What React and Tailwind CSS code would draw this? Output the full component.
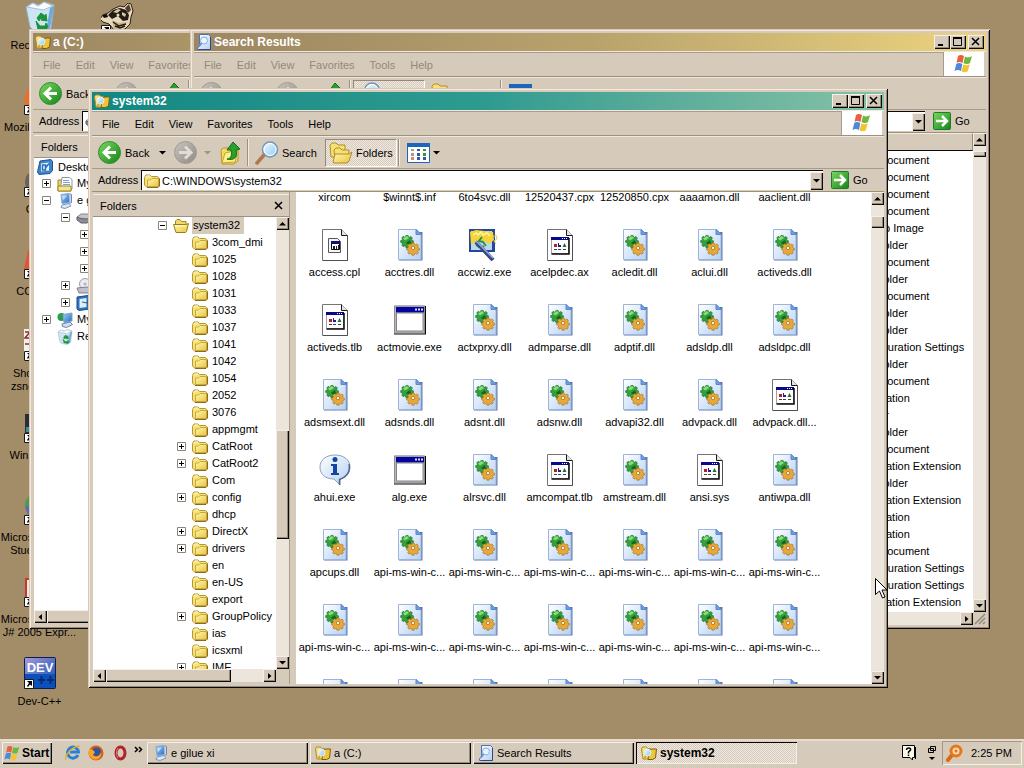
import { useState } from "react";

const raised =
  "bg-[#d6cbbb] shadow-[inset_1px_1px_#f6efe7,inset_-1px_-1px_#0c0a08,inset_-2px_-2px_#94897a]";
const dither =
  "bg-[repeating-conic-gradient(#f0e9e1_0_25%,#d6cbbb_0_50%)] bg-[length:2px_2px]";

const files = [
  ["xircom", "dll"], ["$winnt$.inf", "dll"], ["6to4svc.dll", "dll"], ["12520437.cpx", "doc"], ["12520850.cpx", "doc"], ["aaaamon.dll", "dll"], ["aaclient.dll", "dll"],
  ["access.cpl", "cpl"], ["acctres.dll", "dll"], ["accwiz.exe", "wizard"], ["acelpdec.ax", "doc"], ["acledit.dll", "dll"], ["aclui.dll", "dll"], ["activeds.dll", "dll"],
  ["activeds.tlb", "doc"], ["actmovie.exe", "exe"], ["actxprxy.dll", "dll"], ["admparse.dll", "dll"], ["adptif.dll", "dll"], ["adsldp.dll", "dll"], ["adsldpc.dll", "dll"],
  ["adsmsext.dll", "dll"], ["adsnds.dll", "dll"], ["adsnt.dll", "dll"], ["adsnw.dll", "dll"], ["advapi32.dll", "dll"], ["advpack.dll", "dll"], ["advpack.dll...", "doc"],
  ["ahui.exe", "info"], ["alg.exe", "exe"], ["alrsvc.dll", "dll"], ["amcompat.tlb", "doc"], ["amstream.dll", "dll"], ["ansi.sys", "doc"], ["antiwpa.dll", "dll"],
  ["apcups.dll", "dll"], ...Array(20).fill(["api-ms-win-c...", "dll"]),
];

const folders = [
  { name: "3com_dmi" },
  { name: "1025" },
  { name: "1028" },
  { name: "1031" },
  { name: "1033" },
  { name: "1037" },
  { name: "1041" },
  { name: "1042" },
  { name: "1054" },
  { name: "2052" },
  { name: "3076" },
  { name: "appmgmt" },
  { name: "CatRoot", more: true },
  { name: "CatRoot2", more: true },
  { name: "Com" },
  { name: "config", more: true },
  { name: "dhcp" },
  { name: "DirectX", more: true },
  { name: "drivers", more: true },
  { name: "en" },
  { name: "en-US" },
  { name: "export" },
  { name: "GroupPolicy", more: true },
  { name: "ias" },
  { name: "icsxml" },
  { name: "IME", more: true },
];

const types = [
  "Text Document", "Text Document", "Text Document", "Text Document", "Bitmap Image", "File Folder",
  "Text Document", "File Folder", "Text Document", "File Folder", "File Folder",
  "Configuration Settings", "File Folder", "Text Document", "Application", "Cursor",
  "File Folder", "Text Document", "Application Extension", "File Folder", "Application Extension",
  "Application", "Application", "Text Document", "Configuration Settings", "Configuration Settings",
  "Application Extension",
];

const shortcuts = [
  { label: "Recycle Bin", icon: "bin" },
  { label: "Mozilla Firefox", icon: "firefox" },
  { label: "CDex", icon: "gray" },
  { label: "CCleaner", icon: "red" },
  { label: "Shortcut to zsnesw.exe", icon: "zsnes" },
  { label: "Win Firewall", icon: "dark" },
  { label: "Microsoft Visual Studio 2005", icon: "studio" },
  { label: "Microsoft Visual J# 2005 Expr...", icon: "jsharp" },
  { label: "Dev-C++", icon: "dev" },
];

/* Shared gradients */
function Gradients() {
  const stops = {
    gPage: ["#ffffff", "#b4d0f4"],
    gFolder: ["#fffab0", "#e9c340"],
    gGreen: ["#7bd860", "#128418"],
    gGray: ["#c9c4be", "#8f8a84"],
    gLens: ["#f4fcff", "#8cc8f0"],
    gBlue: ["#9cd4fa", "#2468c0"],
    gDev: ["#a79ad8", "#0a4cb4"],
  };
  return (
    <svg className="absolute" width="0" height="0" aria-hidden="true">
      <defs>
        {Object.entries(stops).map(([id, [a, b]]) => (
          <linearGradient key={id} id={id} x1="0" y1="0" x2="1" y2="1">
            <stop offset="0" stopColor={a} />
            <stop offset="1" stopColor={b} />
          </linearGradient>
        ))}
      </defs>
    </svg>
  );
}

function Svg({ w = 16, h = w, box, className = "", children }) {
  return (
    <svg width={w} height={h} viewBox={box || `0 0 ${w} ${h}`} className={`shrink-0 ${className}`} aria-hidden="true">
      {children}
    </svg>
  );
}

function FolderIcon() {
  return (
    <Svg>
      <path d="M.500 4.500L2 2h4l1.500 1.500h6L15 5v7.500L14 14H2.500L.500 12z" fill="#f6e27c" stroke="#b8982c" />
      <path d="M2 4.500L3 3h3" fill="none" stroke="#fffbd0" />
      <path d="M3.500 7h3L8 5.500h6.500v8h-11z" fill="url(#gFolder)" stroke="#c8a83c" />
      <path d="M15.500 5.500v7.500L14 14.500H3" fill="none" stroke="#8c6c1c" />
    </Svg>
  );
}

function OpenFolderIcon() {
  return (
    <Svg>
      <path d="M2.500 12V3l1.500-1.500h3L8.500 3.500H13v3" fill="#f2d868" stroke="#a8861c" />
      <path d="M.500 6.500h12.500l2.500-1-2 8-1 1H3z" fill="url(#gFolder)" stroke="#9c7c1c" />
      <path d="M2 8h11" stroke="#fffbd0" />
    </Svg>
  );
}

function SearchFolderIcon() {
  return (
    <Svg>
      <path d="M.500 4l1-2h4l1 1.500h3V14H2z" fill="#f7e27a" stroke="#b08c20" />
      <path d="M8 5l3-1h4.500l-1 9-3 1.500H7z" fill="#eec63c" stroke="#7c5c10" />
      <circle cx="6.500" cy="7.500" r="3.500" fill="url(#gLens)" stroke="#e8f0f0" />
      <path d="M3 14l2-3" stroke="#d8a040" strokeWidth="2" />
    </Svg>
  );
}

function SearchDocIcon() {
  return (
    <Svg>
      <path d="M3.500.500h9l2 2v13h-13v-2l2-1z" fill="url(#gPage)" stroke="#5070b8" />
      <path d="M14.500 3v12.500h-12" fill="none" stroke="#2c4688" />
      <circle cx="8" cy="6.500" r="3.500" fill="#e4f6ff" stroke="#86b0dc" />
      <path d="M5.500 9L3 12.500" stroke="#6c90cc" strokeWidth="2" />
    </Svg>
  );
}

function ComputerIcon() {
  return (
    <Svg>
      <path d="M4 1.500l8-1 1 9-8 1z" fill="url(#gBlue)" stroke="#88a8d0" />
      <path d="M12.500.500l2 1v8l-2 1" fill="#c4d4ec" stroke="#7088b0" />
      <path d="M5 12l7-1.500 2 2.500-6 2.500-4-1z" fill="#dce6f4" stroke="#8296b4" />
      <path d="M5 3l5-.500-4 5z" fill="#d8f2ff" opacity=".7" />
    </Svg>
  );
}

function DesktopIcon() {
  return (
    <Svg>
      <path d="M3 2l11-1.500 1.500 2v9L13 14.500 2 15.500.500 13z" fill="#3c84cc" stroke="#1c5494" />
      <path d="M4 4.500l8-1v8l-8 1z" fill="#e8f6ff" />
      <path d="M5.500 6h3v5h-3zM8 9.500l4-5" fill="none" stroke="#2a6cb4" strokeWidth="1.500" />
    </Svg>
  );
}

function DocsFolderIcon() {
  return (
    <Svg>
      <path d="M1 4h5l1 2h7v9H1z" fill="#f0d45c" stroke="#a4841c" />
      <path d="M5 1.500h7.500l2.500 2V13H3.500z" fill="#fff" stroke="#8898a8" />
      <path d="M6 4.500h6M6 6.500h7M6 8.500h7" stroke="#78a4d0" />
      <path d="M1 10h13v5H1z" fill="#f4e498" stroke="#a4841c" />
    </Svg>
  );
}

function DriveIcon() {
  return (
    <Svg>
      <path d="M1 7l4-3h8l3 3-5 4H5z" fill="#c4c4c8" stroke="#85858c" />
      <path d="M1 7l4 1.500 6 .500 5-2v2.500L11 13H5L1 10z" fill="#8c8c94" stroke="#606068" />
    </Svg>
  );
}

function DiscIcon() {
  return (
    <Svg>
      <ellipse cx="9" cy="6" rx="5.500" ry="5.500" fill="#eceaf4" stroke="#9c9cac" />
      <circle cx="9" cy="6" r="1.500" fill="#b0b0c8" />
      <path d="M1 10l10-1 4 2-3 4H3z" fill="#c0c0c8" stroke="#808088" />
    </Svg>
  );
}

function PanelIcon() {
  return (
    <Svg>
      <path d="M1 2l11-1.500 2 1.500v12L3 15.500 1 14z" fill="#2f74bc" stroke="#1a4a88" />
      <path d="M3.500 4l7-1v9l-7 1z" fill="#d8f0ff" />
      <path d="M6 7l8 1.500M11 6l4 3-4 2" stroke="#38506c" fill="none" />
    </Svg>
  );
}

function NetworkIcon() {
  return (
    <Svg>
      <circle cx="4.500" cy="5" r="4" fill="#2c9c4c" />
      <path d="M6 2.500l9-1.500v8l-8 1.500z" fill="url(#gBlue)" stroke="#7ca4cc" />
      <path d="M5 12l8-2 2.500 2.500-6 3-4-1z" fill="#d4dcf0" stroke="#6c80a8" />
    </Svg>
  );
}

function BinIcon({ size = 16 }) {
  return (
    <Svg w={size} box="0 0 32 32">
      <path d="M2 6l6-4 7 2 6-3 9 3-3 23-6 4-12-2-3-3z" fill="#cfe4f2" stroke="#8fb0c8" />
      <path d="M3 6l6-4 5 3 6-4 9 4-10 4z" fill="#f8fcff" stroke="#a8c0d0" />
      <path d="M26 7l4-2-4 22-4 3z" fill="#70a8d8" />
      <path d="M13 17l4-5 4 3 1-2 1 7-6-1 2-1-2-1-2 3zM12 20l4 5h5l1-3 2 4-4 4-1-2h-5z" fill="#18943c" stroke="#18943c" />
    </Svg>
  );
}

function Gear({ cx, cy, fill, stroke }) {
  return (
    <g transform={`translate(${cx} ${cy}) scale(.92)`} fill={fill} stroke={stroke} strokeWidth=".6">
      <path d="M-1.200-5.500h2.400l.4 1.500 1.300.5 1.400-.9 1.600 1.700-.8 1.300.5 1.300 1.400.4v2l-1.500.4-.5 1.100.8 1.500-1.700 1.500-1.300-.8-1.200.4-.4 1.400h-2.400l-.3-1.500-1.200-.4-1.500.8-1.500-1.700.8-1.300-.5-1.200-1.500-.4v-2l1.500-.4.5-1.200-.8-1.400 1.600-1.700 1.400.9 1.300-.5z" />
    </g>
  );
}

function FileIcon({ kind }) {
  if (kind === "dll")
    return (
      <Svg w={32}>
        <path d="M5 3h23.500v28.500H5z" fill="#5c78ac" />
        <path d="M4.500.500h18l4.500 4.500v25.500h-22.500z" fill="url(#gPage)" stroke="#9cb4dc" />
        <path d="M22 .500v5h5.500z" fill="#6c9ee4" stroke="#5c88cc" />
        <Gear cx={13} cy={11.5} fill="#34a03c" stroke="#14641c" />
        <path d="M9 9.500l4-2.500 2 2-4 2.500z" fill="#86e078" />
        <path d="M12 14l4-3 1 3-2 2z" fill="#14641c" />
        <Gear cx={19} cy={19} fill="#e6a83c" stroke="#9c6810" />
        <circle cx="19" cy="19" r="1.700" fill="#fbf3d0" stroke="#9c6810" strokeWidth=".7" />
      </Svg>
    );
  if (kind === "exe")
    return (
      <Svg w={32}>
        <path d="M0 2h32v28.500H0z" fill="#080808" />
        <path d="M0 1.500h31v28H0z" fill="#b8b8bc" />
        <path d="M.500 2h30v27H.500z" fill="none" stroke="#8c8c90" />
        <path d="M2 3h28v5.500H2z" fill="#0404a0" />
        <path d="M2.500 9h26.500v18H2.500z" fill="#fff" stroke="#848488" />
        <path d="M21 4.500h2v2h-2zM24 4.500h2v2h-2zM27 4.500h2v2h-2z" fill="#e0e0e0" />
      </Svg>
    );
  if (kind === "info")
    return (
      <Svg w={32}>
        <path d="M16 1c9 0 15 5 15 12 0 6-4 10-10 12v6l-6-6C6 25 1 20 1 13 1 6 7 1 16 1z" fill="url(#gPage)" stroke="#8ca0bc" />
        <path d="M30 10c2 9-4 14-9.500 15.500V31" fill="none" stroke="#54688c" strokeWidth="1.500" />
        <circle cx="16" cy="5.500" r="2.500" fill="#1444a4" />
        <path d="M12 10h6v9h2v2h-8v-2h2v-7h-2z" fill="#1444a4" />
      </Svg>
    );
  if (kind === "wizard")
    return (
      <Svg w={32}>
        <path d="M0 0h26v23H0z" fill="#24489c" />
        <path d="M2 2h21v19H2z" fill="#b8d8f4" />
        <path d="M1 3l6-2 17 2 1 8-5 4-9-5-9 6z" fill="#f4d438" />
        <path d="M4 6l3-2 2 2 3-3 2 3 4-2 3 3" fill="none" stroke="#fff6a0" strokeWidth="1.500" />
        <path d="M13 8l-3 4 4 1 3 4M8 12c-2 5 3 8 7 5" fill="none" stroke="#309440" strokeWidth="2" />
        <path d="M22 9l5-3 1 4-3 2 2 3" fill="none" stroke="#e8c850" />
        <path d="M7 13l17 18" stroke="#38487c" strokeWidth="4" />
        <path d="M7 12l17 17" stroke="#98a8e0" strokeWidth="1.500" />
      </Svg>
    );
  // generic page, the control panel one has a smaller window on it
  return (
    <Svg w={32}>
      <path d="M3.500.500h19l6 6v25h-25z" fill="#fff" stroke="#747474" />
      <path d="M22.500.500v6h6" fill="#e4e4e4" stroke="#181818" />
      <path d="M28.500 7v24.500H4" fill="none" stroke="#505050" />
      {kind === "cpl" ? (
        <>
          <path d="M9.500 9.500h9l3 3v11h-12z" fill="#f4f4f4" stroke="#585858" />
          <path d="M12.500 12.500h8v8h-8z" fill="#fff" stroke="#080808" />
          <path d="M12 12h9v3h-9z" fill="#101070" />
          <path d="M14 17h2v3h-2zM17 17h1v3h-1zM19 16h1v4h-1z" fill="#202020" />
        </>
      ) : (
        <>
          <path d="M7.500 8.500h17v16h-17z" fill="#fff" stroke="#a0a0a0" />
          <path d="M7 8h18v3H7z" fill="#080888" />
          <path d="M18 9h1v1h-1zM20 9h1v1h-1zM22 9h1v1h-1z" fill="#fff" />
          <path d="M25 9v16H7.500" fill="none" stroke="#080808" strokeWidth="1.500" />
          <path d="M10 15h3v3h-3z" fill="#b42020" />
          <path d="M14 14h1v4h-1zM15 16h2v2h-2z" fill="#1c1c9c" />
          <path d="M18.500 18l2-4 2 4z" fill="#1c7430" />
          <path d="M10 20.500h3M14 20.500h3M19 20.500h3" stroke="#404040" />
        </>
      )}
    </Svg>
  );
}

function RoundArrow({ back, on }) {
  return (
    <Svg w={23}>
      <circle cx="11.500" cy="11.500" r="11" fill={on ? "url(#gGreen)" : "url(#gGray)"} stroke={on ? "#2f8c2c" : "#a09a92"} />
      <path
        d={back ? "M18 11.500H6.500M12 5.500l-6 6 6 6" : "M5 11.500h11.500M11 5.500l6 6-6 6"}
        fill="none"
        stroke={on ? "#fff" : "#e2dcd6"}
        strokeWidth="3"
      />
    </Svg>
  );
}

function UpIcon() {
  return (
    <Svg w={22} h={24}>
      <path d="M1 9l2-2h5l2 2 8-1v12l-4 3H2z" fill="#f3dc66" stroke="#b8942c" />
      <path d="M2 22l3-10 13-3-3 12z" fill="#fbf088" stroke="#c4a438" />
      <path d="M7 18c5 0 5-6 4-9H7l6-8 7 7-4 1c2 7-2 11-9 9z" fill="#28a02c" stroke="#106c18" />
    </Svg>
  );
}

function SearchIcon() {
  return (
    <Svg w={24}>
      <path d="M9 14l-7 8" stroke="#b07850" strokeWidth="3.500" strokeLinecap="round" />
      <circle cx="15" cy="8.500" r="7.500" fill="url(#gLens)" stroke="#7494bc" strokeWidth="1.500" />
      <circle cx="15" cy="8.500" r="6" fill="none" stroke="#fff" />
    </Svg>
  );
}

function FoldersIcon() {
  return (
    <Svg w={24}>
      <path d="M1 4l2-2h4l2 2h7v12H2z" fill="#f6e078" stroke="#b08c24" />
      <path d="M5 9l2-2h4l2 2h7l-1 12H6z" fill="#f6e078" stroke="#b08c24" />
      <path d="M4 21l2-8h14l3-2-3 9-2 2H5z" fill="url(#gFolder)" stroke="#b08c24" />
    </Svg>
  );
}

function ViewsIcon() {
  return (
    <Svg w={23} h={20}>
      <path d="M.500.500h22v19H.500z" fill="#fff" stroke="#1c64bc" />
      <path d="M0 0h23v4H0z" fill="#1c64bc" />
      <g fill="#a49a98"><path d="M4 6h3v2H4zM4 10h3v3H4z" /></g>
      <path d="M10 6h3v2h-3zM10 10h3v3h-3z" fill="#3458a8" />
      <path d="M16 6h3v2h-3zM16 10h3v3h-3z" fill="#389444" />
      <path d="M4 14h3v3H4z" fill="#d88868" />
      <path d="M10 14h3v3h-3zM16 14h3v3h-3z" fill="#3458a8" />
    </Svg>
  );
}

function GoIcon() {
  return (
    <Svg w={18}>
      <rect x=".5" y=".5" width="17" height="17" rx="1" fill="url(#gGreen)" stroke="#1c7c2c" />
      <path d="M3 9h10M9 4l5 5-5 5" fill="none" stroke="#fff" strokeWidth="2.500" />
    </Svg>
  );
}

function FlagIcon({ size = 20 }) {
  return (
    <Svg w={size} box="0 0 20 20">
      <path d="M4 2c2-1.500 4-1 6 0L8.500 9c-2-1-4-1.500-6 0z" fill="#e8603c" />
      <path d="M11 2.500c2 1 4 1.500 7-.5L16 9c-2 1.500-4 1.200-6.500.3z" fill="#6cb83c" />
      <path d="M2.300 10c2-1.500 4-1 6 0L7 17c-2-1.200-4-1.500-6.500 0z" fill="#4c88dc" />
      <path d="M9.300 10.500c2 1 4 1.300 6.500-.3l-2 7c-2 1.500-4 1.300-6.300.3z" fill="#f4c430" />
    </Svg>
  );
}

function Caret({ dir = "down", className = "" }) {
  const paths = { down: "M0 1h7L3.500 4.500z", up: "M0 4.500h7L3.500 1z", left: "M5 0v6L1.500 3z", right: "M2 0v6l3.500-3z" };
  return (
    <Svg w={7} h={6} className={className}>
      <path d={paths[dir]} fill="currentColor" />
    </Svg>
  );
}

function Expander({ open }) {
  return (
    <Svg w={9} className="bg-white">
      <path d="M.500.500h8v8h-8z" fill="#fff" stroke="#8c8478" />
      <path d={open ? "M2 4.500h5" : "M2 4.500h5M4.500 2v5"} stroke="#000" />
    </Svg>
  );
}

function ScrollButton({ dir }) {
  return (
    <button type="button" aria-label={`Scroll ${dir}`} className={`flex h-[13px] w-[13px] shrink-0 items-center justify-center ${raised}`}>
      <Caret dir={dir} />
    </button>
  );
}

function VScroll({ before, thumb }) {
  return (
    <div className="flex w-[13px] shrink-0 flex-col bg-[#ebe5dc]">
      <ScrollButton dir="up" />
      <div className="flex-1">
        <div className={before} />
        <div className={`${thumb} ${raised}`} />
      </div>
      <ScrollButton dir="down" />
    </div>
  );
}

function CaptionButton({ label, children }) {
  return (
    <button type="button" aria-label={label} className={`flex h-[14px] w-4 items-center justify-center ${raised}`}>
      <Svg w={10}>{children}</Svg>
    </button>
  );
}

function TitleBar({ title, icon, color }) {
  return (
    <header className={`flex h-[18px] shrink-0 items-center gap-[2px] bg-linear-to-r px-0.5 text-white ${color}`}>
      {icon}
      <h2 className="flex-1 text-[12px] leading-4 font-bold">{title}</h2>
      <div className="flex">
        <CaptionButton label="Minimize">
          <path d="M1 8h5" stroke="#000" strokeWidth="2" />
        </CaptionButton>
        <CaptionButton label="Maximize">
          <path d="M.500 1v7.500h8V1" fill="none" stroke="#000" />
          <path d="M0 1h9" stroke="#000" strokeWidth="2" />
        </CaptionButton>
        <span className="w-0.5" />
        <CaptionButton label="Close">
          <path d="M1 1l7 7M8 1L1 8" stroke="#000" strokeWidth="1.500" />
        </CaptionButton>
      </div>
    </header>
  );
}

function MenuBar({ faded }) {
  return (
    <nav className="flex h-[26px] shrink-0 border-y border-b-[#9c9080] border-t-[#f0e8de] pr-0.5">
      <div className={`flex flex-1 items-center gap-[15px] border-t border-r border-[#a89c8c] pl-2.5 ${faded ? "text-[#94897a]" : "text-black"}`}>
        {["File", "Edit", "View", "Favorites", "Tools", "Help"].map((item) => (
          <button key={item} type="button">{item}</button>
        ))}
      </div>
      <div className="flex w-10 items-center justify-center bg-white">
        <FlagIcon />
      </div>
    </nav>
  );
}

function Divider() {
  return <span className="mx-px h-[27px] w-0.5 shrink-0 border-r border-l border-r-[#f4ece4] border-l-[#9c9080]" />;
}

function ToolBar({ pressed, canBack }) {
  const toggled = `${dither} border-[#94897a] border-r-white border-b-white`;
  const plain = "border-transparent";
  return (
    <div className="flex h-8 shrink-0 items-center border-t border-t-[#f0e8de] pl-1.5">
      <button type="button" className="flex items-center gap-1">
        <RoundArrow back on={canBack} />
        <span className={`w-[26px] text-left ${canBack ? "" : "text-[#94897a]"}`}>Back</span>
      </button>
      <button type="button" aria-label="Back history" className="ml-2 w-[15px]"><Caret /></button>
      <button type="button" aria-label="Forward"><RoundArrow /></button>
      <button type="button" aria-label="Forward history" className="ml-[7px] w-4 text-[#a09486]"><Caret /></button>
      <button type="button" aria-label="Up" className="mr-1"><UpIcon /></button>
      <Divider />
      <button type="button" aria-pressed={pressed === "search"} className={`ml-px flex h-7 w-[72px] items-center gap-[3px] border pl-[3px] ${pressed === "search" ? toggled : plain}`}>
        <SearchIcon />
        Search
      </button>
      <button type="button" aria-pressed={pressed === "folders"} className={`ml-0.5 flex h-7 w-[72px] items-center gap-[3px] border pl-[3px] ${pressed === "folders" ? toggled : plain}`}>
        <FoldersIcon />
        Folders
      </button>
      <Divider />
      <button type="button" aria-label="Views" className="ml-1.5 flex items-center gap-[3px]">
        <ViewsIcon />
        <Caret />
      </button>
    </div>
  );
}

function AddressBar({ id, icon, initial = "" }) {
  const [path, setPath] = useState(initial);
  return (
    <div className="flex h-6 shrink-0 items-center border-t border-b border-t-[#a89c8c] border-b-[#9a9270] pr-0.5 pl-1.5">
      <label htmlFor={id} className="w-[43px]">Address</label>
      <div className="flex h-5 flex-1 items-center border-t border-l border-t-[#0c0a08] border-l-[#0c0a08] bg-white pl-0.5">
        {icon}
        <input id={id} value={path} onChange={(e) => setPath(e.target.value)} className="ml-0.5 min-w-0 flex-1 outline-none" />
        <button type="button" aria-label="Address list" className={`flex h-[18px] w-[13px] items-center justify-center ${raised}`}>
          <Caret />
        </button>
      </div>
      <button type="button" className="ml-2 flex w-[51px] items-center gap-1">
        <GoIcon />
        Go
      </button>
    </div>
  );
}

function Window({ className, title, icon, color, faded, pressed, canBack, address, addressIcon, children }) {
  return (
    <section
      className={`absolute flex flex-col bg-[#d6cbbb] p-1 shadow-[inset_1px_1px_#d9c8b6,inset_-1px_-1px_#0c0a08,inset_2px_2px_#f4e9de,inset_-2px_-2px_#94897a] ${className}`}
    >
      <TitleBar title={title} icon={icon} color={color} />
      <MenuBar faded={faded} />
      <ToolBar pressed={pressed} canBack={canBack} />
      <AddressBar id={`address-${title}`} icon={addressIcon} initial={address} />
      <div className="flex min-h-0 flex-1">{children}</div>
    </section>
  );
}

function FolderPane({ children, before, thumb, bar }) {
  return (
    <aside className="flex w-[198px] shrink-0 flex-col border-r border-[#a89c8c] py-0.5 pl-px">
      <div className="flex h-[23px] shrink-0 items-center justify-between border-t border-b border-t-[#f4ece4] border-b-[#9c9080] pr-1.5 pl-[7px]">
        Folders
        <button type="button" aria-label="Close folders">
          <Svg w={9}><path d="M1 1l7 7M8 1L1 8" stroke="#000" strokeWidth="1.500" /></Svg>
        </button>
      </div>
      <div className="flex min-h-0 flex-1 bg-white">
        <ul className="min-w-0 flex-1 overflow-hidden">{children}</ul>
        <VScroll before={before} thumb={thumb} />
      </div>
      <div className="flex h-[13px] shrink-0 bg-[#ebe5dc]">
        <ScrollButton dir="left" />
        <div className="flex-1"><div className={`h-[13px] ${bar} ${raised}`} /></div>
        <ScrollButton dir="right" />
        <span className="w-[13px] bg-[#d6cbbb]" />
      </div>
    </aside>
  );
}

function TreeRow({ icon, label, indent, state, selected }) {
  return (
    <li className={`flex h-[17px] items-center whitespace-nowrap ${indent}`}>
      <span className="w-[15px] shrink-0">{state && <Expander open={state === "open"} />}</span>
      {icon}
      <span className={`ml-[3px] h-[17px] px-px leading-[17px] ${selected ? "bg-[#d6cbbb] pr-1" : ""}`}>{label}</span>
    </li>
  );
}

function DriveWindow() {
  return (
    <Window
      className="top-[29px] right-[195px] bottom-[110px] left-[29px]"
      title="a (C:)"
      icon={<SearchFolderIcon />}
      color="from-[#9c8762] to-[#ead27c]"
      faded
      canBack
      pressed="folders"
      addressIcon={<DriveIcon />}
    >
      <FolderPane before="h-0" thumb="h-40" bar="w-[125px]">
        <li className="flex h-[17px] items-center gap-[5px] pl-[3px]"><DesktopIcon />Desktop</li>
        <TreeRow indent="pl-2" icon={<DocsFolderIcon />} label="My Documents" state="closed" />
        <TreeRow indent="pl-2" icon={<ComputerIcon />} label="e gilue xi" state="open" />
        <TreeRow indent="pl-[27px]" icon={<DriveIcon />} label="" state="open" />
        <TreeRow indent="pl-[46px]" icon={<FolderIcon />} label="" state="closed" />
        <TreeRow indent="pl-[46px]" icon={<FolderIcon />} label="" state="closed" />
        <TreeRow indent="pl-[46px]" icon={<FolderIcon />} label="" state="closed" />
        <TreeRow indent="pl-[27px]" icon={<DiscIcon />} label="" state="closed" />
        <TreeRow indent="pl-[27px]" icon={<PanelIcon />} label="" state="closed" />
        <TreeRow indent="pl-2" icon={<NetworkIcon />} label="My Network Places" state="closed" />
        <TreeRow indent="pl-2" icon={<BinIcon />} label="Recycle Bin" />
      </FolderPane>
    </Window>
  );
}

function ResultsWindow() {
  return (
    <Window
      className="top-[29px] right-[34px] bottom-[110px] left-[190px]"
      title="Search Results"
      icon={<SearchDocIcon />}
      color="from-[#9c8762] via-[#b8a26c] to-[#ecd47e]"
      faded
      pressed="search"
      addressIcon={<SearchDocIcon />}
    >
      <div className="flex min-w-0 flex-1 flex-col">
        <div className="flex min-h-0 flex-1 bg-white">
          <div className="min-w-0 flex-1 overflow-hidden">
            <div className="h-[18px] border-t border-r border-b border-t-[#f4ece4] border-r-[#94897a] border-b-[#0c0a08] bg-[#d6cbbb]" />
            <table className="w-full border-collapse">
              <tbody>
                {types.map((type, i) => (
                  <tr key={i} className="h-[17px]">
                    <td className="p-0" />
                    <td className="w-[117px] p-0 whitespace-nowrap">{type}</td>
                  </tr>
                ))}
              </tbody>
            </table>
          </div>
          <VScroll before="h-[5px]" thumb="h-[6px]" />
        </div>
        <div className="flex h-[13px] shrink-0 justify-end bg-[#ebe5dc]">
          <ScrollButton dir="right" />
          <Svg w={13} className="bg-[#d6cbbb]">
            <path d="M2 12L12 2M6 12l6-6M10 12l2-2" stroke="#94897a" strokeWidth="1.500" />
          </Svg>
        </div>
      </div>
    </Window>
  );
}

function SystemWindow() {
  return (
    <Window
      className="top-[88px] right-[136px] bottom-[51px] left-[88px]"
      title="system32"
      icon={<SearchFolderIcon />}
      color="from-[#118883] via-[#2e9b90] to-[#85c2a6]"
      canBack
      pressed="folders"
      address="C:\WINDOWS\system32"
      addressIcon={<FolderIcon />}
    >
      <FolderPane before="h-[200px]" thumb="h-[109px]" bar="w-[125px]">
        <TreeRow indent="pl-[65px]" icon={<OpenFolderIcon />} label="system32" state="open" selected />
        {folders.map((f) => (
          <TreeRow key={f.name} indent="pl-[84px]" icon={<FolderIcon />} label={f.name} state={f.more && "closed"} />
        ))}
      </FolderPane>
      <div className="ml-1.5 flex min-w-0 flex-1 bg-white">
        <div className="min-w-0 flex-1 overflow-hidden">
          <ul className="-mt-[38px] grid grid-cols-[repeat(7,75px)] pl-px">
            {files.map(([name, kind], i) => (
              <li key={i} className="flex h-[75px] flex-col items-center gap-1 whitespace-nowrap">
                <FileIcon kind={kind} />
                <span className="leading-[14px]">{name}</span>
              </li>
            ))}
          </ul>
        </div>
        <VScroll before="h-[11px]" thumb="h-3" />
      </div>
    </Window>
  );
}

function ShortcutArt({ icon }) {
  if (icon === "bin") return <BinIcon size={32} />;
  const art = {
    firefox: <path d="M6 2l-4 8-2 8 3 9 9 5h16V8L14 3l-8 5z" fill="#e8702c" />,
    gray: <path d="M1 17C1 9 8 4 16 4s14 5 14 13-6 13-14 13S1 25 1 17z" fill="#6a6258" />,
    red: <path d="M0 22L4 3h22v26H2z" fill="#e05438" />,
    zsnes: (
      <>
        <path d="M0 0h32v32H0z" fill="#f4f0ec" />
        <path d="M1 3h5L1 9h5M1 15h4" fill="none" stroke="#8c2c2c" strokeWidth="1.500" />
      </>
    ),
    dark: (
      <>
        <path d="M1 3h30v28H1z" fill="#2c2c34" />
        <path d="M2 16h28v5H2z" fill="#3c8c98" />
      </>
    ),
    studio: (
      <>
        <circle cx="12" cy="12" r="11" fill="#4c9c4c" />
        <path d="M1 14l14-5 4 13-14 3z" fill="#5c6cb4" />
      </>
    ),
    jsharp: <path d="M2 4h28v26H2z" fill="#f4e8e0" stroke="#c83828" strokeWidth="2" />,
    dev: (
      <>
        <rect x=".5" y=".5" width="31" height="31" rx="1" fill="url(#gDev)" stroke="#101c50" />
        <path d="M1 17h30v14H1z" fill="#0c50bc" />
        <text x="16" y="15" textAnchor="middle" fontSize="13" fontWeight="bold" fill="#fff">DEV</text>
        <path d="M14 23h7M17.500 19v8M23 23h7M26.500 19v8" stroke="#082c70" strokeWidth="2" />
      </>
    ),
  };
  return (
    <Svg w={32}>
      {art[icon]}
      <ShortcutArrow />
    </Svg>
  );
}

function ShortcutArrow() {
  return (
    <g>
      <path d="M.500 22.500h9v9h-9z" fill="#fff" stroke="#181818" />
      <path d="M3 24h5v5l-2-1.500L4 30l-1-1 2-3z" fill="#000" />
    </g>
  );
}

function RaccoonIcon() {
  return (
    <Svg w={34} h={32}>
      <path d="M2 12l5-2 5-4 7-3 4 1 4-4 3 1 2 7-2 6-1 7-5 5-10 2-6-7-6-2-3-3z" fill="#e6d8b8" stroke="#2a2018" />
      <path d="M7 12l5-5 7-2 6 2 3 5-1 5-5 1-5-5-6 3z" fill="#241c14" />
      <path d="M12 9l5-3 3 1-4 3zM21 9l4 2-1 3-3-2z" fill="#d8c8a4" />
      <circle cx="17" cy="12" r="1.500" fill="#e8d8b0" />
      <path d="M24 5l4-4 2 6-3 3z" fill="#4c4030" />
      <path d="M1 12l5-1 1 3-4 1z" fill="#100c08" />
      <path d="M11 17l7 3 8-1-4 6-9 1z" fill="#c4b490" />
      <path d="M12 19l6 4 7-2M14 23l5 2 5-2" fill="none" stroke="#241c14" strokeWidth="1.500" />
      <ShortcutArrow />
    </Svg>
  );
}

function Desktop() {
  return (
    <div className="flex pt-px">
      <ul className="w-[79px]">
        {shortcuts.map((s) => (
          <li key={s.label} className="flex h-[82px] flex-col items-center gap-1.5">
            <ShortcutArt icon={s.icon} />
            <span className="text-center leading-[13px]">{s.label}</span>
          </li>
        ))}
      </ul>
      <div className="flex w-[78px] justify-center pt-0.5">
        <RaccoonIcon />
      </div>
    </div>
  );
}

function TaskButton({ icon, label, active }) {
  return (
    <button
      type="button"
      className={`flex h-[22px] max-w-[161px] flex-1 items-center gap-[3px] pl-[5px] ${
        active
          ? `${dither} text-[12px] font-bold shadow-[inset_1px_1px_#0c0a08,inset_-1px_-1px_#f6efe7]`
          : raised
      }`}
    >
      {icon}
      {label}
    </button>
  );
}

function Taskbar() {
  return (
    <footer className="flex h-[29px] shrink-0 items-center border-t-2 border-t-[#e9dccd] bg-[#d6cbbb] px-0.5 pb-[3px]">
      <button type="button" className={`flex h-[22px] w-[50px] items-center gap-px pl-0.5 text-[12px] font-bold ${raised}`}>
        <FlagIcon size={17} />
        Start
      </button>
      <div className="flex items-center gap-[7px] pl-[13px]">
        <button type="button" aria-label="Internet Explorer">
          <Svg>
            <path d="M13 10a5.500 5.500 0 1 1 .500-3H5" fill="none" stroke="#2c80d4" strokeWidth="3" />
            <path d="M1 15C-1 10 9 0 15 1.500" fill="none" stroke="#e4b030" strokeWidth="1.500" />
          </Svg>
        </button>
        <button type="button" aria-label="Firefox">
          <Svg>
            <circle cx="8" cy="8" r="7.500" fill="#d85c18" />
            <circle cx="8.500" cy="7" r="4.500" fill="#30549c" />
            <path d="M1 4c3 0 4 1 6 3l-2 3c3 3 7 1 8-3 1 6-4 9-8 7S0 9 1 4z" fill="#f4a428" />
          </Svg>
        </button>
        <button type="button" aria-label="Opera">
          <Svg>
            <path d="M1 12l4-2v5H2z" fill="#d8d0d0" />
            <ellipse cx="9.500" cy="8" rx="4.500" ry="6" fill="none" stroke="#b0242c" strokeWidth="3" />
            <path d="M7 3c-2 3-2 7 0 10" fill="none" stroke="#e87878" />
          </Svg>
        </button>
        <button type="button" aria-label="More quick launch" className="-mt-2 w-3">
          <Svg w={9} h={7}><path d="M1 1l2.500 2.500L1 6M5 1l2.500 2.500L5 6" fill="none" stroke="#000" strokeWidth="1.500" /></Svg>
        </button>
      </div>
      <div className="ml-px flex flex-1 gap-0.5">
        <TaskButton icon={<ComputerIcon />} label="e gilue xi" />
        <TaskButton icon={<SearchFolderIcon />} label="a (C:)" />
        <TaskButton icon={<SearchDocIcon />} label="Search Results" />
        <TaskButton icon={<SearchFolderIcon />} label="system32" active />
      </div>
      <button type="button" aria-label="Help" className="mr-3">
        <Svg w={14} h={16}>
          <path d="M.500.500h12v12h-2v2.500l-2.500-2.500H.500z" fill="#fdfbe8" stroke="#000" />
          <path d="M13.500 2v12" stroke="#000" />
          <path d="M4.500 5c0-3 5-2.500 4 0L6.500 7v1.500M6.500 9.500V11" fill="none" stroke="#000" strokeWidth="1.500" />
        </Svg>
      </button>
      <button type="button" aria-label="Restore tray" className="mr-[5px]">
        <Svg w={9} h={16}>
          <path d="M2.500 1.500h5v4h-5zM.500 3.500h5v4h-5z" fill="#d6cbbb" stroke="#000" />
          <path d="M1 12h6l-3 3z" />
        </Svg>
      </button>
      <div className="flex h-6 w-20 items-center gap-2 pl-1 shadow-[inset_1px_1px_#a3978a,inset_-1px_-1px_#f6efe7]">
        <Svg w={17} h={18}>
          <path d="M6 11l-4 5" stroke="#d86c14" strokeWidth="4" strokeLinecap="round" />
          <circle cx="10" cy="7" r="5" fill="#f6d8b0" stroke="#e4781c" strokeWidth="3" />
          <circle cx="10" cy="7" r="1.500" fill="#e4781c" />
        </Svg>
        <time>2:25 PM</time>
      </div>
    </footer>
  );
}

export default function App() {
  return (
    <div className="flex h-screen flex-col overflow-hidden bg-[#a38d68] font-['Liberation_Sans',Arial,sans-serif] text-[11px] leading-[14px] text-black">
      <Gradients />
      <main className="relative min-h-0 flex-1 overflow-hidden">
        <Desktop />
        <DriveWindow />
        <ResultsWindow />
        <SystemWindow />
        {/* Mouse pointer */}
        <Svg w={13} h={21} className="absolute top-[578px] left-[875px]">
          <path d="M.500.500v16l4-3.500 3 7 2.500-1-3-7h5z" fill="#fff" stroke="#000" />
        </Svg>
      </main>
      <Taskbar />
    </div>
  );
}
